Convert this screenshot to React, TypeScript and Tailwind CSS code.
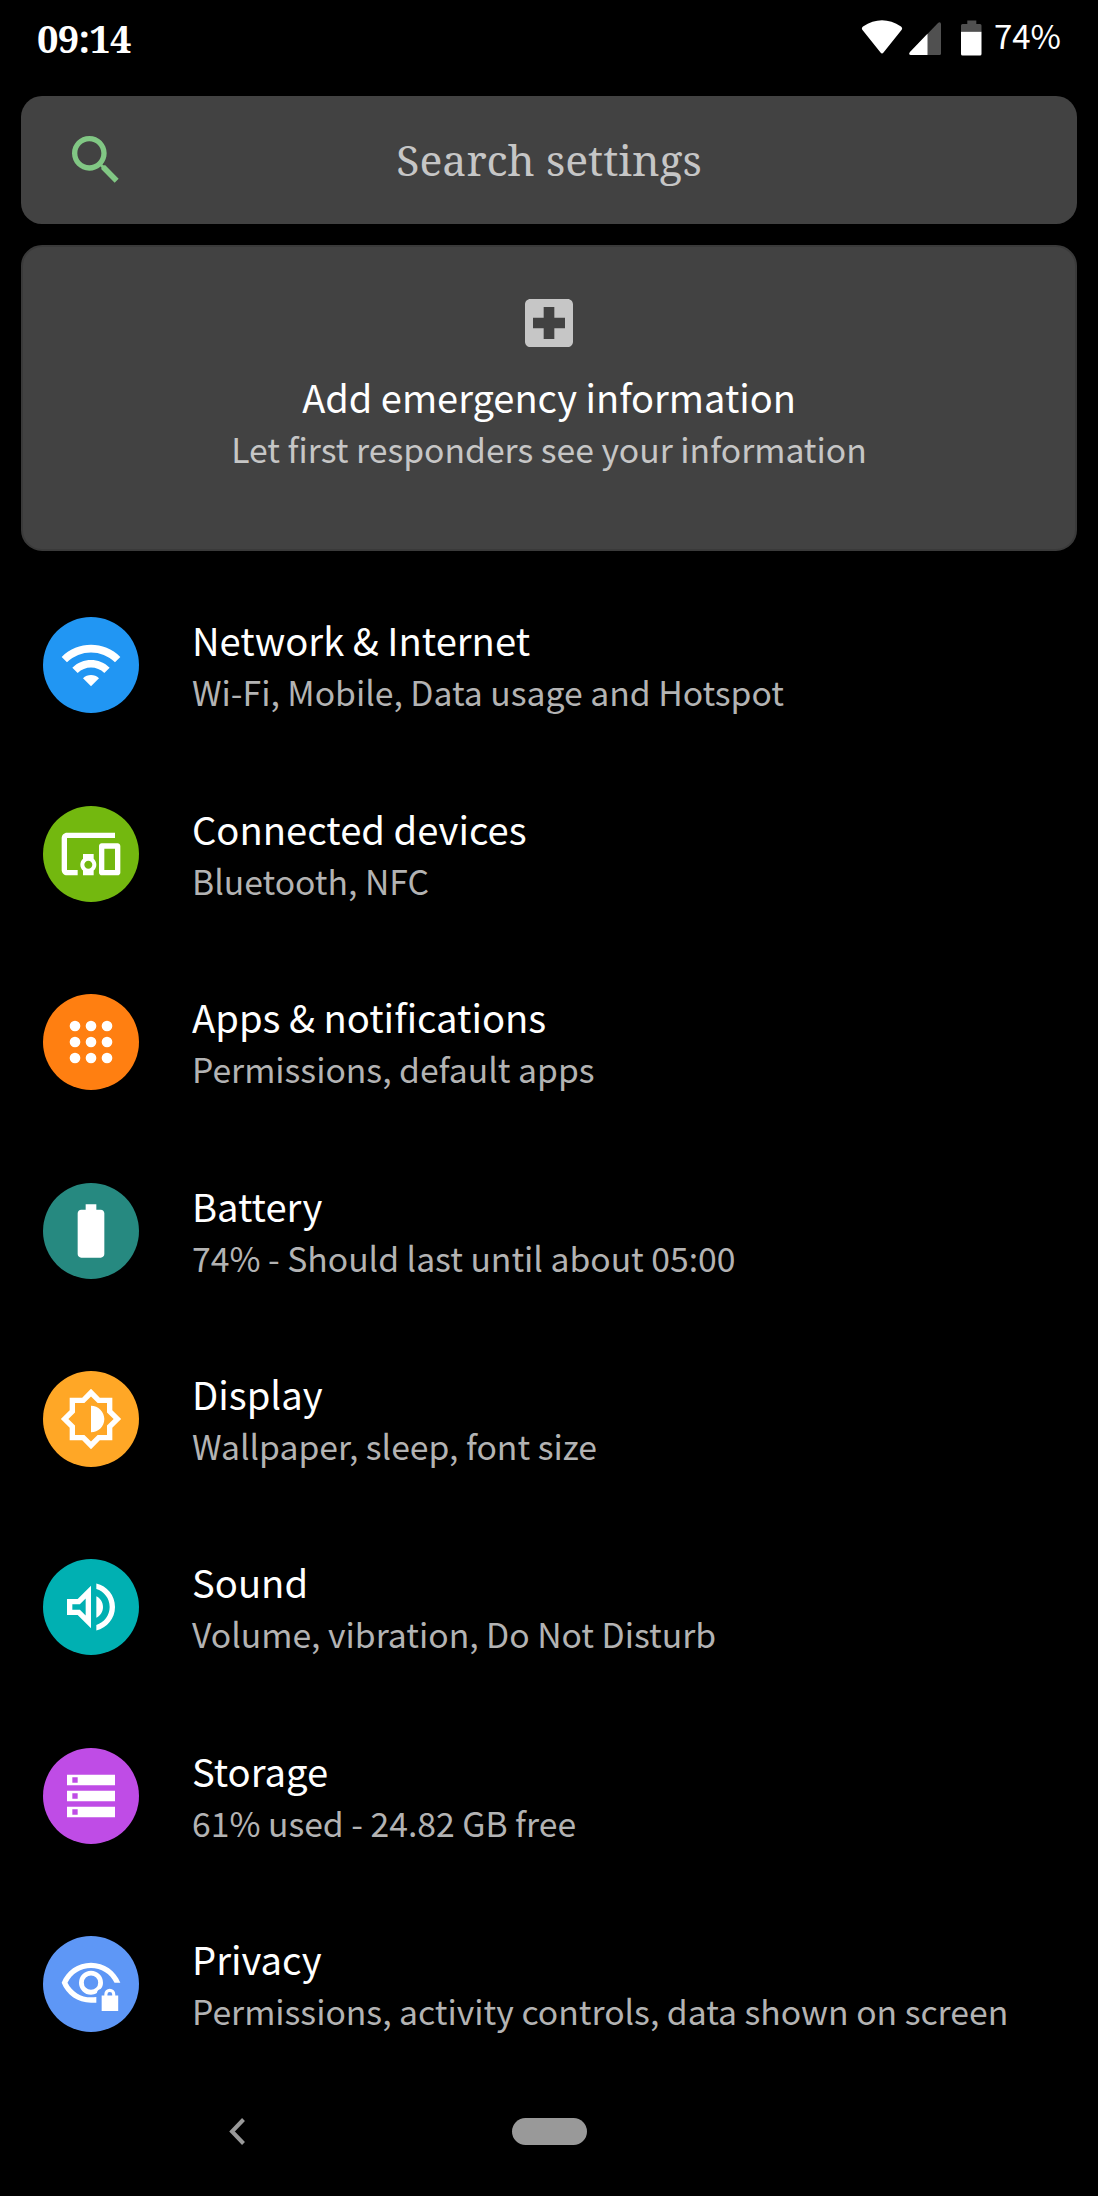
import type { ReactNode } from "react";

const paths = {
  search:
    "M15.5 14h-.79l-.28-.27C15.41 12.59 16 11.11 16 9.5 16 5.91 13.09 3 9.5 3S3 5.91 3 9.5 5.91 16 9.5 16c1.61 0 3.09-.59 4.23-1.57l.27.28v.79l5 4.99L20.49 19l-4.99-5zm-6 0C7.01 14 5 11.99 5 9.5S7.01 5 9.5 5 14 7.01 14 9.5 11.99 14 9.5 14z",
  emergency:
    "M19 3H5c-1.1 0-2 .9-2 2v14c0 1.1.9 2 2 2h14c1.1 0 2-.9 2-2V5c0-1.1-.9-2-2-2zm-1 11h-4v4h-4v-4H6v-4h4V6h4v4h4v4z",
  wifi: "M1 9l2 2c4.97-4.97 13.03-4.97 18 0l2-2C16.93 2.93 7.08 2.93 1 9zm8 8l3 3 3-3c-1.65-1.66-4.34-1.66-6 0zm-4-4l2 2c2.76-2.76 7.24-2.76 10 0l2-2C15.14 9.14 8.87 9.14 5 13z",
  devices:
    "M3 6h18V4H3c-1.1 0-2 .9-2 2v12c0 1.1.9 2 2 2h4v-2H3V6zm10 6H9v1.78c-.61.55-1 1.33-1 2.22s.39 1.67 1 2.22V20h4v-1.78c.61-.55 1-1.34 1-2.22s-.39-1.67-1-2.22V12zm-2 5.5c-.83 0-1.5-.67-1.5-1.5s.67-1.5 1.5-1.5 1.5.67 1.5 1.5-.67 1.5-1.5 1.5zM22 8h-6c-.5 0-1 .5-1 1v10c0 .5.5 1 1 1h6c.5 0 1-.5 1-1V9c0-.5-.5-1-1-1zm-1 10h-4v-8h4v8z",
  apps: "M4 6a2 2 0 1 0 4 0a2 2 0 1 0-4 0M10 6a2 2 0 1 0 4 0a2 2 0 1 0-4 0M16 6a2 2 0 1 0 4 0a2 2 0 1 0-4 0M4 12a2 2 0 1 0 4 0a2 2 0 1 0-4 0M10 12a2 2 0 1 0 4 0a2 2 0 1 0-4 0M16 12a2 2 0 1 0 4 0a2 2 0 1 0-4 0M4 18a2 2 0 1 0 4 0a2 2 0 1 0-4 0M10 18a2 2 0 1 0 4 0a2 2 0 1 0-4 0M16 18a2 2 0 1 0 4 0a2 2 0 1 0-4 0",
  battery:
    "M15.67 4H14V2h-4v2H8.33C7.6 4 7 4.6 7 5.33v15.33C7 21.4 7.6 22 8.33 22h7.33c.74 0 1.34-.6 1.34-1.33V5.33C17 4.6 16.4 4 15.67 4z",
  display:
    "M20 15.31L23.31 12 20 8.69V4h-4.69L12 .69 8.69 4H4v4.69L.69 12 4 15.31V20h4.69L12 23.31 15.31 20H20v-4.69zm-2-.83V18h-3.52L12 20.48 9.52 18H6v-3.52L3.52 12 6 9.52V6h3.52L12 3.52 14.48 6H18v3.52L20.48 12 18 14.48zM12 7v10c2.76 0 5-2.24 5-5s-2.24-5-5-5z",
  sound:
    "M3 9v6h4l5 5V4L7 9H3zm7-.17v6.34L7.83 13H5v-2h2.83L10 8.83zM16.5 12c0-1.77-1.02-3.29-2.5-4.03v8.05c1.48-.73 2.5-2.25 2.5-4.02zM14 3.23v2.06c2.89.86 5 3.54 5 6.71s-2.11 5.85-5 6.71v2.06c4.01-.91 7-4.49 7-8.77s-2.99-7.86-7-8.77z",
  storage:
    "M3 20h18v-4H3v4zm2-3h2v2H5v-2zM3 4v4h18V4H3zm4 3H5V5h2v2zm-4 7h18v-4H3v4zm2-3h2v2H5v-2z",
};

const Glyph = ({ d }: { d: string }) => (
  <svg viewBox="0 0 24 24" className="size-16 fill-current">
    <path fillRule="evenodd" d={d} />
  </svg>
);

// Eye with a padlock in its lower right corner
const PrivacyGlyph = () => (
  <svg viewBox="0 0 24 24" className="size-16 fill-current">
    <path d="M12 6c3.79 0 7.17 2.13 8.82 5.5H23C21.27 7.11 17 4 12 4S2.73 7.11 1 11.5C2.73 15.89 7 19 12 19h2v-2.1c-.65.07-1.32.1-2 .1-3.79 0-7.17-2.13-8.82-5.5C4.83 8.13 8.21 6 12 6z" />
    <path
      fillRule="evenodd"
      d="M12 7a4.5 4.5 0 1 0 0 9c.8 0 1.5-.2 2.2-.6c.1-.9.7-1.4 1.4-1.5c.6-.7.9-1.5.9-2.4A4.5 4.5 0 0 0 12 7zm0 1.8a2.7 2.7 0 1 1 0 5.4a2.7 2.7 0 0 1 0-5.4z"
    />
    <path
      fillRule="evenodd"
      d="M16 16.3h1v-.5a2.05 2.05 0 0 1 4.1 0v.5h1.1v5.8H16zM18.15 16.3h1.8v-.4a.9.9 0 0 0-1.8 0z"
    />
  </svg>
);

type Entry = { title: string; summary: string; color: string; icon: ReactNode };

const entries: Entry[] = [
  { title: "Network & Internet", summary: "Wi‑Fi, Mobile, Data usage and Hotspot", color: "bg-[#2196f3]", icon: <Glyph d={paths.wifi} /> },
  { title: "Connected devices", summary: "Bluetooth, NFC", color: "bg-[#73b80f]", icon: <Glyph d={paths.devices} /> },
  { title: "Apps & notifications", summary: "Permissions, default apps", color: "bg-[#ff7f11]", icon: <Glyph d={paths.apps} /> },
  { title: "Battery", summary: "74% - Should last until about 05:00", color: "bg-[#268980]", icon: <Glyph d={paths.battery} /> },
  { title: "Display", summary: "Wallpaper, sleep, font size", color: "bg-[#ffa726]", icon: <Glyph d={paths.display} /> },
  { title: "Sound", summary: "Volume, vibration, Do Not Disturb", color: "bg-[#00b0b2]", icon: <Glyph d={paths.sound} /> },
  { title: "Storage", summary: "61% used - 24.82 GB free", color: "bg-[#bf4ce6]", icon: <Glyph d={paths.storage} /> },
  { title: "Privacy", summary: "Permissions, activity controls, data shown on screen", color: "bg-[#5e97f6]", icon: <PrivacyGlyph /> },
];

const StatusBar = () => (
  <header className="flex h-[75px] shrink-0 items-center justify-between px-[37px]">
    <span className="font-['Noto_Serif',serif] text-[38px] font-bold leading-none tracking-[-0.02em]">
      09:14
    </span>
    <div className="flex w-[200px] items-center justify-between">
      <svg viewBox="0 0 124 40" className="h-10 w-[124px]">
        {/* wifi */}
        <path d="M2 8.5Q21-4 40 8.5Q42 10 40.5 12L22.5 34.5Q21 36.5 19.5 34.5L1.5 12Q0 10 2 8.5z" fill="#fff" />
        {/* mobile signal */}
        <path d="M80 6v29.500q0 1.500-1.500 1.500H50q-3-.5-1-3L77 5q2.500-2 3 1z" fill="#505050" />
        <path d="M66.500 15.800V37H50q-3-.5-1-3z" fill="#fff" />
        {/* battery */}
        <path d="M106.300 2.500h9V6h3.700q1.500 0 1.500 1.500v6.300H100V7.500Q100 6 101.500 6h4.800z" fill="#505050" />
        <path d="M100 13.800h20.500V36q0 1.500-1.500 1.500h-17.500Q100 37.500 100 36z" fill="#fff" />
      </svg>
      <span className="pb-[4px] text-[33px] leading-none">74%</span>
    </div>
  </header>
);

const SearchBar = () => (
  <div className="mx-[21px] mt-[21px] flex h-32 shrink-0 items-center rounded-[21px] bg-[#424242] px-[43px]">
    <div className="text-[#81c784]">
      <Glyph d={paths.search} />
    </div>
    <span className="flex-1 pr-16 pt-px text-center font-['Noto_Serif',serif] text-[42.800px] leading-none text-[#c6c6c6]">
      Search settings
    </span>
  </div>
);

const EmergencyCard = () => (
  <section className="mx-[21px] mt-[21px] flex h-[306px] shrink-0 flex-col items-center rounded-[21px] border-2 border-[#3a3a3a] bg-[#424242] pt-[44px]">
    <div className="text-[#c6c6c6]">
      <Glyph d={paths.emergency} />
    </div>
    <h2 className="mt-[14px] text-[38px] leading-[56px]">Add emergency information</h2>
    <p className="text-[33.700px] leading-[48px] text-[#c6c6c6]">Let first responders see your information</p>
  </section>
);

const SettingsRow = ({ title, summary, color, icon }: Entry) => (
  <li className="flex h-[188.360px] items-center pl-[42.500px]">
    <div className={`flex size-24 shrink-0 items-center justify-center rounded-full ${color}`}>{icon}</div>
    <div className="ml-[53.500px] pb-[3px]">
      <h3 className="text-[38.200px] leading-[56px]">{title}</h3>
      <p className="text-[33.700px] leading-[47px] text-[#b3b3b3]">{summary}</p>
    </div>
  </li>
);

const NavBar = () => (
  <nav className="flex h-[107px] shrink-0 items-center text-[#999]">
    <svg viewBox="0 0 16 27" className="ml-[229px] h-[27px] w-4">
      <path d="M14.500 1.500L3 13.500l11.500 12" fill="none" stroke="currentColor" strokeWidth="4" />
    </svg>
    <div className="ml-[266.500px] h-[27px] w-[75px] rounded-full bg-[#999]" />
  </nav>
);

export default function App() {
  return (
    <main className="flex h-[2196px] w-[1098px] flex-col overflow-hidden bg-black font-['Noto_Sans_CJK_SC',sans-serif] text-white">
      <StatusBar />
      <SearchBar />
      <EmergencyCard />
      <ul className="mt-[20.300px] shrink-0">
        {entries.map((entry) => (
          <SettingsRow key={entry.title} {...entry} />
        ))}
      </ul>
      <NavBar />
    </main>
  );
}
